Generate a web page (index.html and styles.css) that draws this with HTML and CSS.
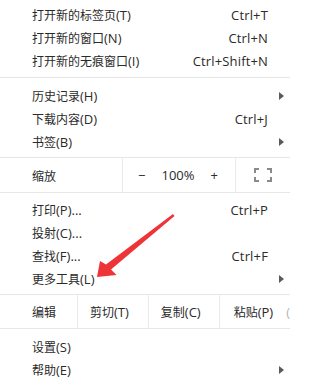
FILE: index.html
```html
<!DOCTYPE html>
<html lang="zh-CN">
<head>
<meta charset="utf-8">
<title>菜单</title>
<link rel="stylesheet" href="styles.css">
</head>
<body>
<div class="page">
  <div class="menu">
    <div class="group g-top">
      <div class="item"><span class="label"><span class="zh">打开新的标签页</span>(T)</span><span class="key">Ctrl+T</span><span class="sub"></span></div>
      <div class="item"><span class="label"><span class="zh">打开新的窗口</span>(N)</span><span class="key">Ctrl+N</span><span class="sub"></span></div>
      <div class="item"><span class="label"><span class="zh">打开新的无痕窗口</span>(I)</span><span class="key">Ctrl+Shift+N</span><span class="sub"></span></div>
    </div>
    <div class="sep"></div>
    <div class="group">
      <div class="item"><span class="label"><span class="zh">历史记录</span>(H)</span><span class="key"></span><span class="sub"><i class="tri"></i></span></div>
      <div class="item"><span class="label"><span class="zh">下载内容</span>(D)</span><span class="key">Ctrl+J</span><span class="sub"></span></div>
      <div class="item"><span class="label"><span class="zh">书签</span>(B)</span><span class="key"></span><span class="sub"><i class="tri"></i></span></div>
    </div>
    <div class="sep"></div>
    <div class="zoom-row">
      <div class="z-label"><span class="zh">缩放</span></div>
      <div class="z-ctl"><span class="z-minus">−</span><span class="z-val">100%</span><span class="z-plus">+</span></div>
      <div class="z-fs">
        <svg width="18" height="14" viewBox="0 0 18 14" class="fs-icon">
          <path d="M1 5V1H5 M13 1H17V5 M17 9V13H13 M5 13H1V9" fill="none" stroke="#8a8a8a" stroke-width="2"/>
        </svg>
      </div>
    </div>
    <div class="sep"></div>
    <div class="group g-mid">
      <div class="item"><span class="label"><span class="zh">打印</span>(P)...</span><span class="key">Ctrl+P</span><span class="sub"></span></div>
      <div class="item"><span class="label"><span class="zh">投射</span>(C)...</span><span class="key"></span><span class="sub"></span></div>
      <div class="item"><span class="label"><span class="zh">查找</span>(F)...</span><span class="key">Ctrl+F</span><span class="sub"></span></div>
      <div class="item"><span class="label"><span class="zh">更多工具</span>(L)</span><span class="key"></span><span class="sub"><i class="tri"></i></span></div>
    </div>
    <div class="sep"></div>
    <div class="edit-row">
      <div class="e-label"><span class="zh">编辑</span></div>
      <div class="e-cell"><span class="zh">剪切</span>(T)</div>
      <div class="e-cell"><span class="zh">复制</span>(C)</div>
      <div class="e-cell e-last"><span class="zh">粘贴</span>(P)<span class="e-cut">(</span></div>
    </div>
    <div class="sep"></div>
    <div class="group">
      <div class="item"><span class="label"><span class="zh">设置</span>(S)</span><span class="key"></span><span class="sub"></span></div>
      <div class="item"><span class="label"><span class="zh">帮助</span>(E)</span><span class="key"></span><span class="sub"><i class="tri"></i></span></div>
    </div>
  </div>
  <svg class="red-arrow" width="290" height="384" viewBox="0 0 290 384">
    <polygon points="97,277 100,261 106,264.5 173,214 174.5,216 111,269.5 116.5,275" fill="#ef3438"/>
  </svg>
</div>
</body>
</html>
```

FILE: styles.css
```css
html, body {
  margin: 0;
  padding: 0;
  background: #ffffff;
}

.page {
  position: relative;
  width: 290px;
  height: 384px;
  overflow: hidden;
  font-family: "Open Sans", "Noto Sans CJK SC", sans-serif;
  font-size: 13px;
  color: #2a2a2a;
}

.zh {
  font-family: "Noto Sans CJK SC", sans-serif;
  font-size: 12px;
}

.menu {
  display: flex;
  flex-direction: column;
}

.group {
  padding: 6px 0 4px;
}

.g-top {
  padding-top: 3px;
  padding-bottom: 5px;
}

.g-mid {
  padding-top: 5px;
}

.item {
  display: grid;
  grid-template-columns: 1fr auto 22px;
  align-items: center;
  height: 23px;
  line-height: 23px;
  padding-left: 32px;
  white-space: nowrap;
}

.key {
  letter-spacing: 0.15px;
}

.sub {
  display: flex;
  align-items: center;
  height: 23px;
  padding-left: 11px;
}

.tri {
  display: block;
  width: 0;
  height: 0;
  border-left: 5px solid #5a5a5a;
  border-top: 4px solid transparent;
  border-bottom: 4px solid transparent;
}

.sep {
  height: 1px;
  background: #e7e7e7;
}

.zoom-row {
  display: flex;
  height: 34px;
  align-items: stretch;
}

.z-label {
  width: 90px;
  padding-left: 32px;
  border-right: 1px solid #ebebeb;
  display: flex;
  align-items: center;
}

.z-ctl {
  width: 113px;
  border-right: 1px solid #ebebeb;
  display: flex;
  align-items: center;
  justify-content: space-between;
  padding: 0 17px 0 15px;
  box-sizing: border-box;
}

.z-fs {
  flex: 1;
  display: flex;
  align-items: center;
  justify-content: center;
}

.edit-row {
  display: flex;
  height: 33px;
  align-items: stretch;
  white-space: nowrap;
}

.e-label {
  width: 45px;
  padding-left: 32px;
  border-right: 1px solid #ebebeb;
  display: flex;
  align-items: center;
}

.e-cell {
  width: 71px;
  box-sizing: border-box;
  padding-left: 12px;
  border-right: 1px solid #ebebeb;
  display: flex;
  align-items: center;
}

.e-last {
  flex: 1;
  border-right: none;
  padding-left: 14px;
}

.e-cut {
  color: #b5b5b5;
  margin-left: 13px;
}

.red-arrow {
  position: absolute;
  left: 0;
  top: 0;
  pointer-events: none;
}
```
